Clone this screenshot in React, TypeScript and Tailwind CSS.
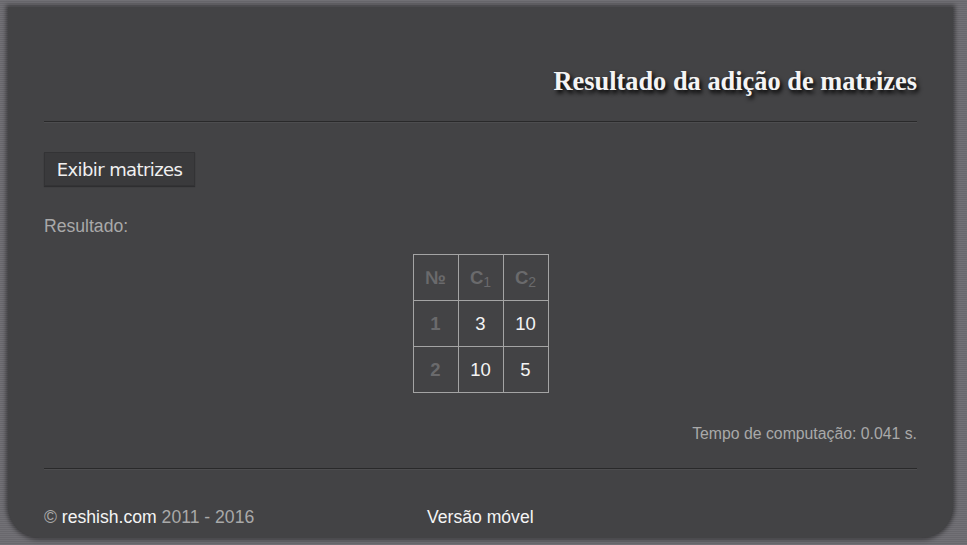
import React from "react";

const rows = [
  { n: 1, c: [3, 10] },
  { n: 2, c: [10, 5] },
];

const App = () => {
  return (
    <div
      className="h-[545px] w-[967px] overflow-hidden bg-[#6d6c71]"
      style={{
        backgroundImage:
          "repeating-linear-gradient(0deg, rgba(255,255,255,0.035) 0px, rgba(255,255,255,0.035) 1px, rgba(0,0,0,0.035) 1px, rgba(0,0,0,0.035) 2px)",
      }}
    >
      <div className="ml-[8px] mt-[7px] h-[531px] w-[945px] rounded-b-[32px] bg-[#434345] px-[36px] shadow-[0_0_4px_2px_rgba(0,0,0,0.45)] font-['Liberation_Sans',Arial,sans-serif]">
        {/* Title */}
        <h1 className="pt-[59px] text-right text-[26.4px] font-bold leading-[30px] text-[#f4f4f4] font-['Liberation_Serif','Times_New_Roman',serif] [text-shadow:2px_3px_4px_#000]">
          Resultado da adição de matrizes
        </h1>
        <div className="mt-[25px] h-px bg-[#29292a] shadow-[0_1px_0_#4d4d4f]" />

        {/* Button */}
        <button className="mt-[30px] h-[34px] w-[151px] border border-[#333335] bg-[#3a3a3c] text-[18px] text-[#f0f0f0] font-['DejaVu_Sans',Tahoma,sans-serif] tracking-[-0.6px] shadow-[0_1px_1px_rgba(0,0,0,0.3)]">
          Exibir matrizes
        </button>

        <p className="mt-[30px] text-[17.6px] leading-[20px] text-[#a9a9a9]">Resultado:</p>

        {/* Matrix */}
        <div className="mt-[18px] flex justify-center">
          <table className="border-collapse text-[18.5px]">
            <thead>
              <tr>
                <th className="h-[46px] w-[45px] border border-[#a4a4a4] font-bold text-[#6a6a6c]">№</th>
                <th className="h-[46px] w-[45px] border border-[#a4a4a4] font-bold text-[#6a6a6c]">
                  C<sub className="text-[14px] font-normal">1</sub>
                </th>
                <th className="h-[46px] w-[45px] border border-[#a4a4a4] font-bold text-[#6a6a6c]">
                  C<sub className="text-[14px] font-normal">2</sub>
                </th>
              </tr>
            </thead>
            <tbody>
              {rows.map((r) => (
                <tr key={r.n}>
                  <td className="h-[46px] w-[45px] border border-[#a4a4a4] text-center font-bold text-[#6a6a6c]">{r.n}</td>
                  {r.c.map((v, i) => (
                    <td key={i} className="h-[46px] w-[45px] border border-[#a4a4a4] text-center text-[#f4f4f4]">
                      {v}
                    </td>
                  ))}
                </tr>
              ))}
            </tbody>
          </table>
        </div>

        <p className="mt-[31px] text-right text-[15.8px] leading-[20px] text-[#a9a9a9]">
          Tempo de computação: 0.041 s.
        </p>

        <div className="mt-[24px] h-px bg-[#29292a] shadow-[0_1px_0_#4d4d4f]" />

        {/* Footer */}
        <div className="mt-[38px] flex text-[17.6px] leading-[20px]">
          <span className="w-[383px] text-[#a9a9a9]">
            © <span className="text-[#f4f4f4]">reshish.com</span> 2011 - 2016
          </span>
          <span className="text-[#f4f4f4]">Versão móvel</span>
        </div>
      </div>
    </div>
  );
};

export default App;
